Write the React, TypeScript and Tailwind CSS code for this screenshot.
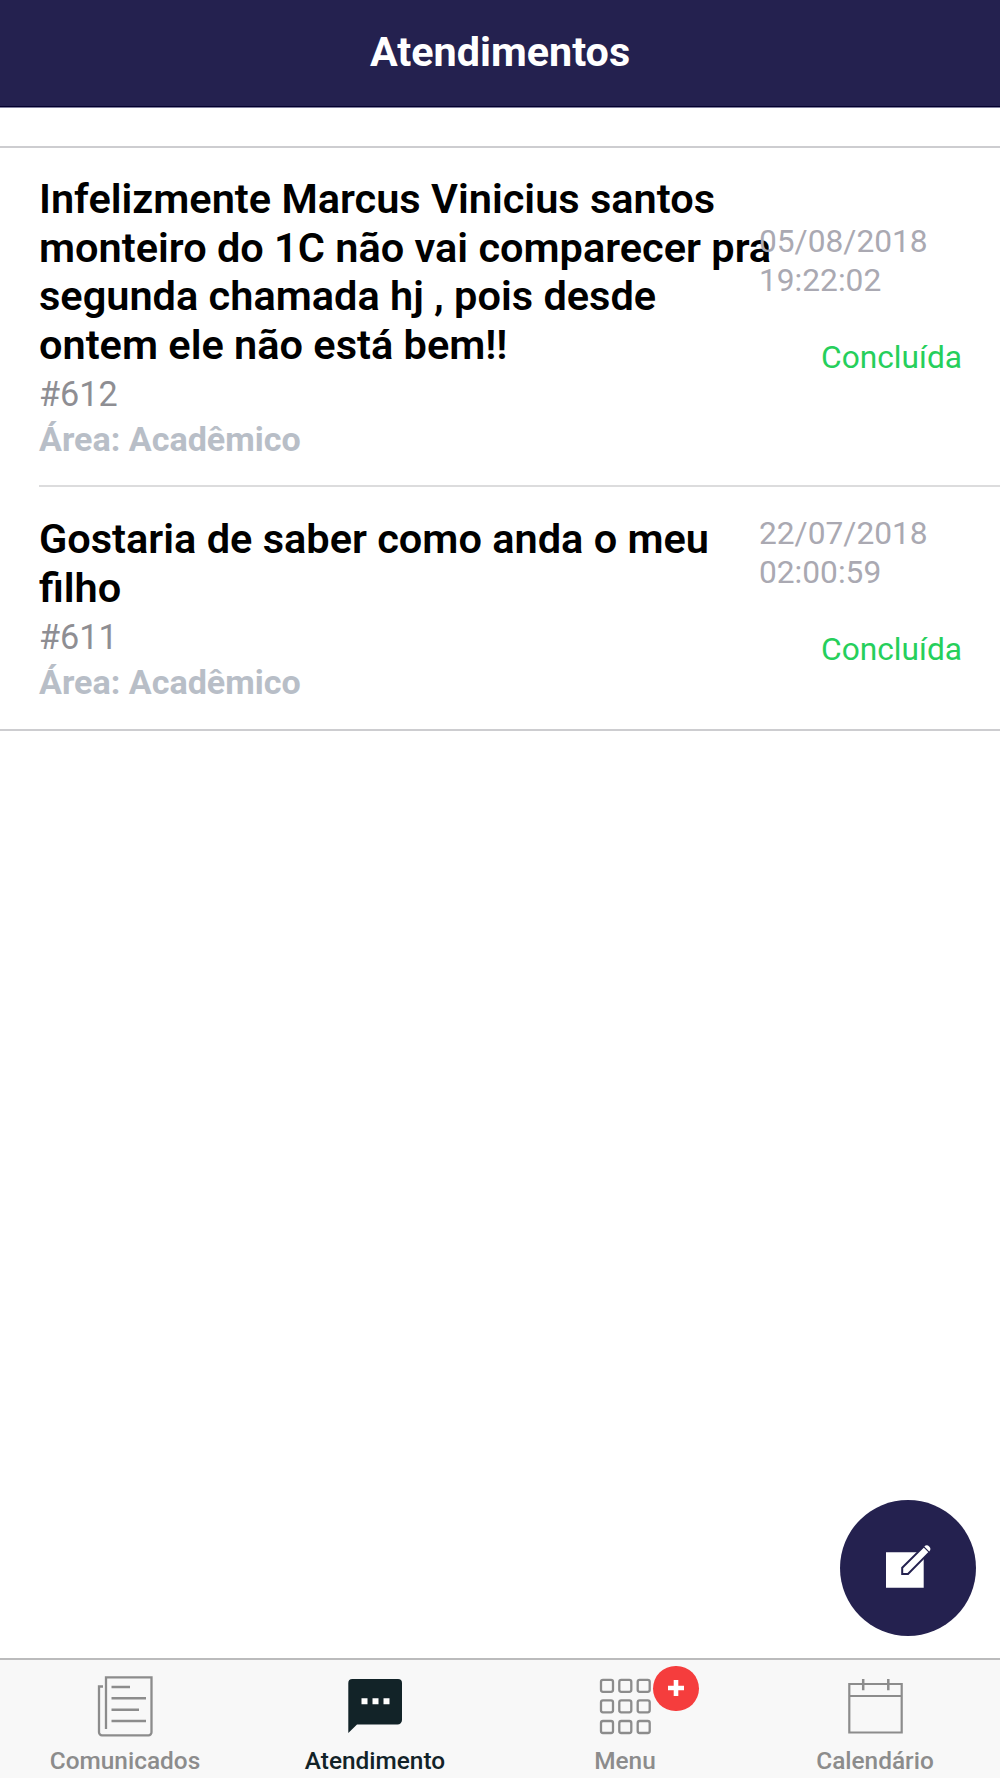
import React from 'react';

interface Ticket {
  title: string[];
  id: string;
  area: string;
  date: string;
  time: string;
  status: string;
}

const tickets: Ticket[] = [
  {
    title: [
      'Infelizmente Marcus Vinicius santos',
      'monteiro do 1C não vai comparecer pra',
      'segunda chamada hj , pois desde',
      'ontem ele não está bem!!'
    ],
    id: '#612',
    area: 'Acadêmico',
    date: '05/08/2018',
    time: '19:22:02',
    status: 'Concluída'
  },
  {
    title: ['Gostaria de saber como anda o meu', 'filho'],
    id: '#611',
    area: 'Acadêmico',
    date: '22/07/2018',
    time: '02:00:59',
    status: 'Concluída'
  }
];

const NewsIcon: React.FC = () => (
  <svg width="56" height="62" viewBox="0 0 56 62" fill="none" stroke="currentColor" strokeWidth="2.3">
    <path d="M9 54V2.3H54.5v55a3 3 0 0 1-3 3H5a3 3 0 0 1-3-3V11.5h4" />
    <path d="M14.5 12H33M14.5 23.3H49M14.5 34.7H42M14.5 46H49" strokeWidth="2.6" />
  </svg>
);

const ChatIcon: React.FC = () => (
  <svg width="56" height="62" viewBox="0 0 56 62">
    <path d="M5 4h46a4 4 0 0 1 4 4v37a4.5 4.5 0 0 1-4.5 4.5H10L1.3 58V8a4 4 0 0 1 4-4z" fill="currentColor" />
    <path d="M14.5 23.3h6v6h-6zM25.5 23.3h6v6h-6zM36.5 23.3h6v6h-6z" fill="#fff" />
  </svg>
);

const GridIcon: React.FC = () => (
  <svg width="56" height="62" viewBox="0 0 56 62" fill="none" stroke="currentColor" strokeWidth="2.3">
    {[4.8, 25.3, 46].map((y) =>
      [4, 22.3, 40.7].map((x) => (
        <rect key={`${x}-${y}`} x={x} y={y} width="12" height="12" rx="2" />
      ))
    )}
  </svg>
);

const CalendarIcon: React.FC = () => (
  <svg width="56" height="62" viewBox="0 0 56 62" fill="none" stroke="currentColor" strokeWidth="2.2">
    <path d="M2.3 9h52.4v48.5H2.3zM2.3 21h52.4" />
    <path d="M16.2 4v11.3M41.3 4v11.3" strokeWidth="2.5" />
  </svg>
);

const ComposeIcon: React.FC = () => (
  <svg width="46" height="44" viewBox="0 0 46 44" className="overflow-visible">
    <path d="M1 6.2h37.7v35.6H1z" fill="#fff" />
    <path d="M17.2 21.7L38.8 0.3l5.8 5.8L23 28h-5.8z" fill="#fff" stroke="#24214f" strokeWidth="2" />
    <path d="M36.5 -1.5l9.5 9.5 5-5-9-9z" fill="#24214f" />
    <path d="M39.3 0.6a3.4 3.4 0 1 1 4.9 4.9z" fill="#fff" />
  </svg>
);

const tabs = [
  { label: 'Comunicados', icon: <NewsIcon /> },
  { label: 'Atendimento', icon: <ChatIcon />, active: true },
  { label: 'Menu', icon: <GridIcon />, badge: true },
  { label: 'Calendário', icon: <CalendarIcon /> }
];

const TicketRow: React.FC<{ ticket: Ticket }> = ({ ticket }) => (
  <li className="flex items-center pr-[38px] pt-[27px] pb-[22.6px]">
    <div className="w-[720px] shrink-0">
      <h2 className="text-[41.5px] leading-[48.6px] font-semibold text-black whitespace-nowrap">
        {ticket.title.map((line) => (
          <span key={line} className="block">{line}</span>
        ))}
      </h2>
      <p className="mt-[3px] text-[34.2px] leading-[45px] text-[#8e8e93]">{ticket.id}</p>
      <p className="text-[34.1px] leading-[45px] font-bold text-[#b8bec7]">Área: {ticket.area}</p>
    </div>
    <div className="mb-[37.5px] grow text-[31.7px] leading-[39px]">
      <p className="text-[#aaa9b2]">
        {ticket.date}
        <br />
        {ticket.time}
      </p>
      <p className="mt-[38px] text-right text-[#26cf5b]">{ticket.status}</p>
    </div>
  </li>
);

export default function App() {
  return (
    <div className="relative flex h-[1778px] w-[1000px] flex-col overflow-hidden bg-white font-['Roboto',sans-serif]">
      <header className="flex h-[108px] shrink-0 items-center justify-center border-b border-[#8382a0] bg-[#24214f] pb-[3px] shadow-[inset_0_-1px_0_#03002c]">
        <h1 className="text-[41.3px] leading-[50px] font-bold text-white">Atendimentos</h1>
      </header>

      <main className="grow pt-[38px]">
        <ul className="divide-y-2 divide-[#dcdcdd] border-y-2 border-[#cdcdd0] pl-[39px]">
          {tickets.map((ticket) => (
            <TicketRow key={ticket.id} ticket={ticket} />
          ))}
        </ul>
      </main>

      <button className="absolute top-[1499.5px] left-[840px] flex size-[136px] items-center justify-center rounded-full bg-[#24214f]">
        <ComposeIcon />
      </button>

      <nav className="grid h-[120px] shrink-0 grid-cols-4 border-t-2 border-[#bbbbbc] bg-[#f8f8f8]">
        {tabs.map((tab) => (
          <div
            key={tab.label}
            className={`flex flex-col items-center pt-[15px] ${tab.active ? 'text-[#122328]' : 'text-[#8c8c8c]'}`}
          >
            <div className="relative">
              {tab.icon}
              {tab.badge && (
                <span className="absolute -top-[9px] left-[56px] flex h-[45px] w-[46px] items-center justify-center rounded-full bg-[#f53d3d]">
                  <svg width="16" height="16" viewBox="0 0 16 16" stroke="#fff" strokeWidth="4.6" className="-mt-[2px]">
                    <path d="M8 0v16M0 8h16" />
                  </svg>
                </span>
              )}
            </div>
            <span className="mt-[9px] text-[24.4px] leading-[30px] font-medium">{tab.label}</span>
          </div>
        ))}
      </nav>
    </div>
  );
}
